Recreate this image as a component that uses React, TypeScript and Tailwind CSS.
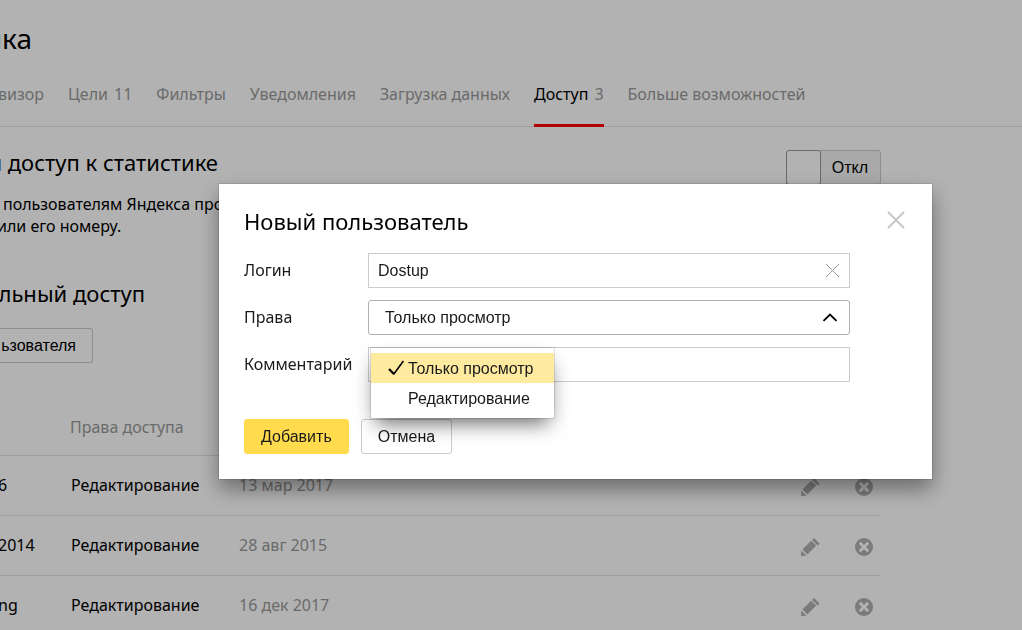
import React, { useState } from 'react';
import clsx from 'clsx';

const tabs = [
  { title: 'визор' },
  { title: 'Цели', count: 11 },
  { title: 'Фильтры' },
  { title: 'Уведомления' },
  { title: 'Загрузка данных' },
  { title: 'Доступ', count: 3, active: true },
  { title: 'Больше возможностей' },
];

const users = [
  { login: '6', rights: 'Редактирование', date: '13 мар 2017' },
  { login: '2014', rights: 'Редактирование', date: '28 авг 2015' },
  { login: 'ng', rights: 'Редактирование', date: '16 дек 2017' },
];

const rightsOptions = ['Только просмотр', 'Редактирование'];

const PencilIcon: React.FC = () => (
  <svg width="20" height="20" viewBox="0 0 20 20" fill="currentColor">
    <path d="M11.2 3.8 16.2 8.6 7.4 17.4 2.4 12.6z" />
    <path d="M12.1 2.9 14.1 1 19.6 6.7 17.6 8.4z" />
    <path d="M1.1 13.6 6.5 18.8 1.1 19.1z" />
  </svg>
);

const DeleteIcon: React.FC = () => (
  <svg width="18" height="18" viewBox="0 0 18 18">
    <circle cx="9" cy="9" r="9" fill="currentColor" />
    <path d="M4.8 4.8 13.2 13.2M13.2 4.8 4.8 13.2" stroke="#fff" strokeWidth="3" />
  </svg>
);

const CrossIcon: React.FC<{ size: number; strokeWidth: number }> = ({ size, strokeWidth }) => (
  <svg width={size} height={size} viewBox={`0 0 ${size} ${size}`} fill="none" stroke="currentColor" strokeWidth={strokeWidth}>
    <path d={`M1 1 ${size - 1} ${size - 1}M${size - 1} 1 1 ${size - 1}`} />
  </svg>
);

const AccessPage: React.FC = () => (
  <div className="overflow-hidden">
    <h1 className="flex w-8 justify-end pt-5 text-[28px] leading-9">ика</h1>

    {/* Tabs */}
    <nav className="mt-6 -ml-[2px] flex h-[47px] gap-6 border-b border-[#e2e2e2] whitespace-nowrap">
      {tabs.map((tab) => (
        <a
          key={tab.title}
          href="#"
          className={clsx(
            '-mb-px flex gap-[6px] border-b-[3px] pt-[2px] leading-6',
            tab.active ? 'border-[#f00] text-black' : 'border-transparent text-[#999]'
          )}
        >
          {tab.title}
          {tab.count && <span className="text-[#999]">{tab.count}</span>}
        </a>
      ))}
    </nav>

    <main className="pr-[141px]">
      {/* Public access */}
      <div className="flex items-start justify-between pt-[23px]">
        <h2 className="flex w-[218px] justify-end text-[22px] leading-6 whitespace-nowrap">й доступ к статистике</h2>
        <button
          type="button"
          className="flex h-[35px] rounded-[3px] border border-[#ccc] bg-[#f2f2f2] font-['Liberation_Sans',sans-serif]"
        >
          <span className="-m-px h-[35px] w-[35px] rounded-[3px] border border-[#999] bg-white" />
          <span className="px-3 leading-[33px]">Откл</span>
        </button>
      </div>
      <p className="mt-2 pl-[3px] leading-[22px]">
        пользователям Яндекса просматривать
        <br />
        <span className="-ml-[6px]">или его номеру.</span>
      </p>

      {/* Individual access */}
      <h2 className="mt-11 flex w-[145px] justify-end text-[22px] leading-6 whitespace-nowrap">льный доступ</h2>
      <button
        type="button"
        className="mt-[23px] flex h-[35px] w-[93px] items-center justify-end rounded-r-[3px] border border-l-0 border-[#ccc] pr-4 font-['Liberation_Sans',sans-serif]"
      >
        ьзователя
      </button>

      <table className="mt-[34px] w-full table-fixed text-left">
        <thead>
          <tr className="h-[58px] text-[#999]">
            <th className="w-[70px]" />
            <th className="w-[169px] pt-[2px] font-normal">Права доступа</th>
            <th />
            <th className="w-[55px]" />
            <th className="w-[26px]" />
          </tr>
        </thead>
        <tbody>
          {users.map((user) => (
            <tr key={user.login} className="h-[60px] border-t border-[#e2e2e2]">
              <td>
                <span className="-ml-[2px]">{user.login}</span>
              </td>
              <td className="pl-px">{user.rights}</td>
              <td className="text-[#999]">{user.date}</td>
              <td>
                <button type="button" aria-label="Изменить" className="flex pt-1 text-[#b0b0b0]">
                  <PencilIcon />
                </button>
              </td>
              <td>
                <button type="button" aria-label="Удалить" className="flex pt-1 text-[#b0b0b0]">
                  <DeleteIcon />
                </button>
              </td>
            </tr>
          ))}
        </tbody>
      </table>
    </main>
  </div>
);

const NewUserDialog: React.FC = () => {
  const [login, setLogin] = useState('Dostup');
  const [rights, setRights] = useState(rightsOptions[0]);
  const [comment, setComment] = useState('');

  return (
    <form
      role="dialog"
      aria-labelledby="dialog-title"
      className="w-full bg-white p-[25px] text-[#1a1a1a] shadow-[0_0_0_1px_rgba(0,0,0,0.1),0_10px_20px_rgba(0,0,0,0.4)]"
    >
      <div className="flex items-start justify-between">
        <h2 id="dialog-title" className="text-[22px] leading-6 text-black">Новый пользователь</h2>
        <button type="button" aria-label="Закрыть" className="mt-[2px] mr-[2px] text-[#c8c8c8]">
          <CrossIcon size={18} strokeWidth={2} />
        </button>
      </div>

      <div className="mt-5 mr-[57px] grid grid-cols-[124px_1fr] items-center gap-y-3">
        <label htmlFor="login" className="pb-[2px]">Логин</label>
        <div className="flex h-[35px] items-center border border-[#ccc] pr-[9px]">
          <input
            id="login"
            type="text"
            value={login}
            onChange={(e) => setLogin(e.target.value)}
            className="min-w-0 flex-1 px-[9px] font-['Liberation_Sans',sans-serif] outline-none"
          />
          <button type="button" aria-label="Очистить" onClick={() => setLogin('')} className="text-[#999]">
            <CrossIcon size={15} strokeWidth={1} />
          </button>
        </div>

        <label htmlFor="rights" className="pb-[2px]">Права</label>
        <div className="relative">
          <select
            id="rights"
            value={rights}
            onChange={(e) => setRights(e.target.value)}
            className="block h-[35px] w-full appearance-none rounded-[3px] border border-[#b0b0b0] px-4 font-['Liberation_Sans',sans-serif] outline-none"
          >
            {rightsOptions.map((option) => (
              <option key={option}>{option}</option>
            ))}
          </select>
          <svg className="pointer-events-none absolute top-[13px] right-3" width="16" height="9" viewBox="0 0 16 9" fill="none" stroke="#000" strokeWidth="1.8">
            <path d="M1.5 7.8 8 1.5 14.5 7.8" />
          </svg>

          {/* Dropdown */}
          <ul
            role="listbox"
            className="absolute top-12 left-[3px] z-10 bg-white py-[5px] font-['Liberation_Sans',sans-serif] shadow-[0_0_0_1px_rgba(0,0,0,0.1),0_10px_20px_-5px_rgba(0,0,0,0.6)]"
          >
            {rightsOptions.map((option) => (
              <li
                key={option}
                role="option"
                aria-selected={option === rights}
                onClick={() => setRights(option)}
                className={clsx(
                  'flex h-[30px] w-[183px] items-center pt-[2px] pl-4 whitespace-nowrap',
                  option === rights && 'bg-[#ffeba0]'
                )}
              >
                <span className="w-[21px]">
                  {option === rights && (
                    <svg width="18" height="18" viewBox="0 0 18 18" fill="none" stroke="#000">
                      <path d="M2 8.9 6.9 14" strokeWidth="2.2" />
                      <path d="M6.5 14.4 16.4 1" strokeWidth="1.6" />
                    </svg>
                  )}
                </span>
                {option}
              </li>
            ))}
          </ul>
        </div>

        <label htmlFor="comment" className="pb-[2px]">Комментарий</label>
        <input
          id="comment"
          type="text"
          value={comment}
          onChange={(e) => setComment(e.target.value)}
          className="h-[35px] w-full border border-[#ccc] px-[9px] font-['Liberation_Sans',sans-serif] outline-none"
        />
      </div>

      <div className="mt-[37px] flex gap-3 font-['Liberation_Sans',sans-serif]">
        <button type="button" className="h-[35px] rounded-[3px] border border-[#ffdb4d] bg-[#ffdb4d] px-4">Добавить</button>
        <button type="button" className="h-[35px] rounded-[3px] border border-[#ccc] px-4">Отмена</button>
      </div>
    </form>
  );
};

export default function App() {
  return (
    <div className="h-screen overflow-hidden bg-white font-['Noto_Sans',sans-serif] text-base text-black">
      <AccessPage />
      <div className="fixed inset-0 bg-black/30 pt-[184px] pr-[90px] pl-[219px]">
        <NewUserDialog />
      </div>
    </div>
  );
}
